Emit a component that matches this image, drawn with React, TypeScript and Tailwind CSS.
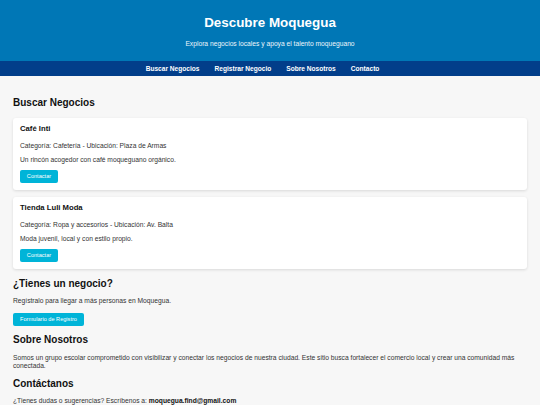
import React from "react";

const font = { fontFamily: '"Liberation Sans", Arial, sans-serif' };

function Card({ title, cat, desc }: { title: string; cat: string; desc: string }) {
  return (
    <div className="bg-white rounded-[3px] shadow-[0_1px_3px_rgba(0,0,0,0.12)] px-[7px] pt-[6px] pb-[7px]">
      <h3 className="text-[7.7px] leading-[10px] font-bold text-[#111]">{title}</h3>
      <p className="mt-[8px] text-[6.7px] leading-[8px] text-[#333]">{cat}</p>
      <p className="mt-[6px] text-[6.7px] leading-[8px] text-[#333]">{desc}</p>
      <button className="mt-[6px] h-[13px] w-[38px] bg-[#00b4d8] text-white text-[5.6px] rounded-[2px] flex items-center justify-center">
        Contactar
      </button>
    </div>
  );
}

export default function App() {
  return (
    <div className="min-h-[405px] bg-[#f7f7f7] text-[#333]" style={font}>
      <header className="bg-[#0077b6] h-[61px] flex flex-col items-center text-white pt-[15px]">
        <h1 className="text-[13.4px] leading-[16px] font-bold">Descubre Moquegua</h1>
        <p className="mt-[9px] text-[6.7px] leading-[8px] text-[#eef6fb]">
          Explora negocios locales y apoya el talento moqueguano
        </p>
      </header>
      <nav className="bg-[#023e8a] h-[15px] flex items-center justify-center gap-[15px] pr-[15px] text-white text-[6.6px] font-bold">
        <span>Buscar Negocios</span>
        <span>Registrar Negocio</span>
        <span>Sobre Nosotros</span>
        <span>Contacto</span>
      </nav>
      <main className="px-[13px]">
        <h2 className="mt-[21px] text-[10px] leading-[12px] font-bold text-[#111]">Buscar Negocios</h2>
        <div className="mt-[9px] flex flex-col gap-[7px]">
          <Card
            title="Café Inti"
            cat="Categoría: Cafetería - Ubicación: Plaza de Armas"
            desc="Un rincón acogedor con café moqueguano orgánico."
          />
          <Card
            title="Tienda Luli Moda"
            cat="Categoría: Ropa y accesorios - Ubicación: Av. Balta"
            desc="Moda juvenil, local y con estilo propio."
          />
        </div>
        <h2 className="mt-[9px] text-[10px] leading-[12px] font-bold text-[#111]">¿Tienes un negocio?</h2>
        <p className="mt-[7px] text-[6.7px] leading-[8px]">Regístralo para llegar a más personas en Moquegua.</p>
        <button className="mt-[8px] h-[13px] w-[71px] bg-[#00b4d8] text-white text-[5.6px] rounded-[2px] flex items-center justify-center">
          Formulario de Registro
        </button>
        <h2 className="mt-[8px] text-[10px] leading-[12px] font-bold text-[#111]">Sobre Nosotros</h2>
        <p className="mt-[8px] text-[6.7px] leading-[8px]">
          Somos un grupo escolar comprometido con visibilizar y conectar los negocios de nuestra ciudad. Este sitio busca fortalecer el comercio local y crear una comunidad más conectada.
        </p>
        <h2 className="mt-[8px] text-[10px] leading-[12px] font-bold text-[#111]">Contáctanos</h2>
        <p className="mt-[7px] text-[6.7px] leading-[8px]">
          ¿Tienes dudas o sugerencias? Escríbenos a: <strong className="text-[#111]">moquegua.find@gmail.com</strong>
        </p>
      </main>
    </div>
  );
}
